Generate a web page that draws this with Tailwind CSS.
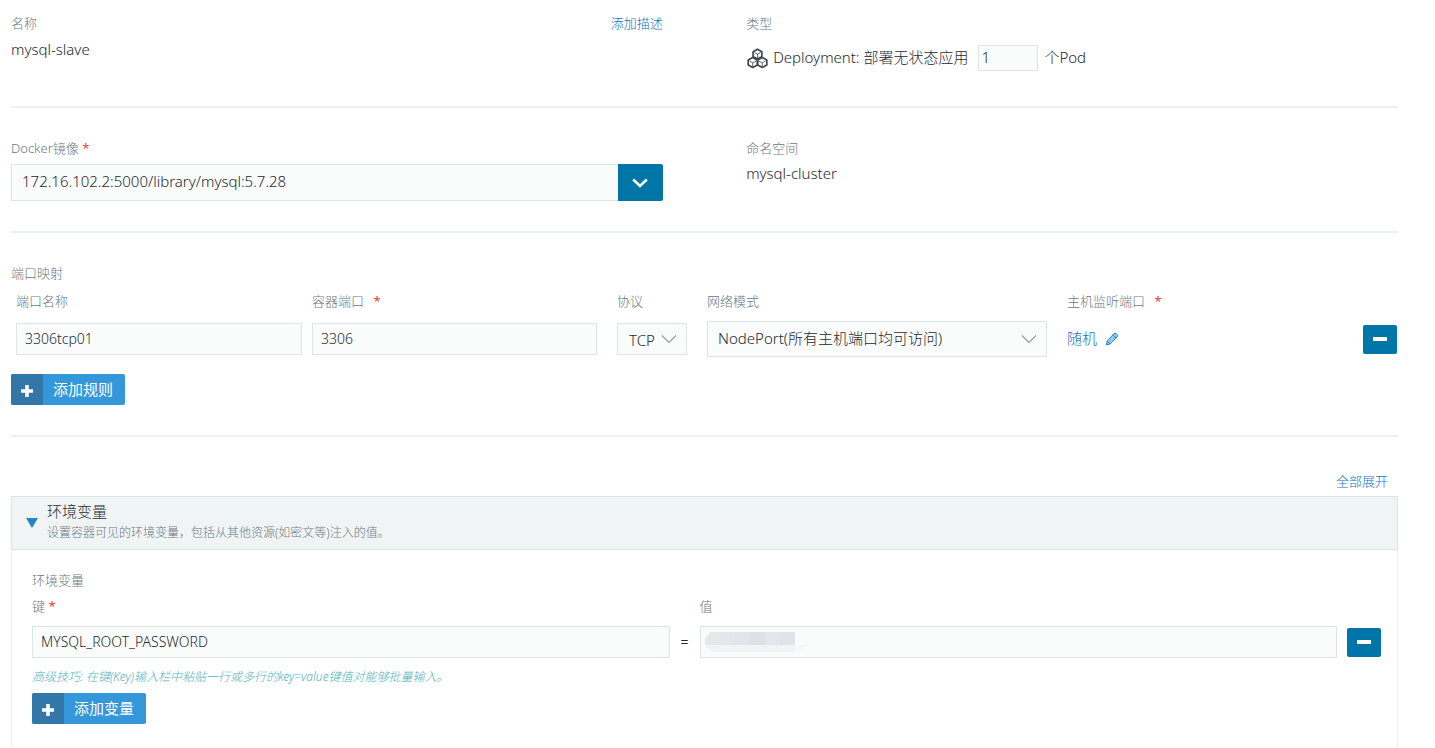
<!DOCTYPE html>
<html lang="zh-CN">
<head>
    <meta charset="UTF-8">
    <meta name="viewport" content="width=device-width, initial-scale=1.0">
    <title>mysql-slave</title>
    <script src="https://cdn.jsdelivr.net/npm/@tailwindcss/browser@4"></script>
</head>
<body class="bg-white">
    <form class="min-h-screen flex flex-col pl-[11px] pr-[37px] font-['Noto_Sans','Noto_Sans_CJK_SC',sans-serif] font-light text-[15px] leading-6 text-[#25292f]">

        <!-- Name and type -->
        <section class="grid grid-cols-[47%_47%] justify-between pt-[13px] pb-[35px] border-b-2 border-[#ecf0f0]">
            <div>
                <div class="flex justify-between text-[13px] leading-5">
                    <span class="text-[#6c7882]">名称</span>
                    <a href="#" class="text-[#1474c0]">添加描述</a>
                </div>
                <div class="mt-1">mysql-slave</div>
            </div>
            <div>
                <div class="text-[13px] leading-5 text-[#6c7882]">类型</div>
                <div class="mt-3 flex items-center">
                    <svg class="w-[21px] h-[21px] ml-px mr-[5px] shrink-0" viewBox="0 0 21 21" fill="none" stroke="#43474d" stroke-linejoin="round">
                        <g stroke-width="1.7">
                            <path d="M10.500 1.200 14.900 3.700V8.600L10.500 11 6.100 8.600V3.700Z"/>
                            <path d="M5.700 9.400 10.300 12.100V16.900L5.700 19.500 1.200 16.900V12.100Z"/>
                            <path d="M15.300 9.400 19.800 12.100V16.900L15.300 19.500 10.700 16.900V12.100Z"/>
                        </g>
                        <g stroke-width=".8">
                            <path d="M7.500 4.500 10.500 6 13.500 4.500M10.500 6V10"/>
                            <path d="M2.500 13 5.700 14.800 9.300 13M5.700 14.800V18.500"/>
                            <path d="M11.700 13 15.300 14.800 18.500 13M15.300 14.800V18.500"/>
                        </g>
                    </svg>
                    <label for="scale" class="pb-0.5">Deployment: 部署无状态应用</label>
                    <input id="scale" type="text" value="1" class="w-[60px] h-[26px] ml-2.5 mr-1.5 px-0.5 pb-0.5 border border-[#dce4e4] bg-[#fafcfc] outline-none">
                    <span class="pb-0.5">个Pod</span>
                </div>
            </div>
        </section>

        <!-- Image and namespace -->
        <section class="grid grid-cols-[47%_47%] justify-between pt-[30px] pb-[30px] border-b-2 border-[#ecf0f0]">
            <div>
                <label for="image" class="block text-[13px] leading-5 text-[#6c7882]">Docker镜像 <span class="text-[#f03c3c] font-normal">*</span></label>
                <div class="mt-1.5 flex">
                    <input id="image" type="text" value="172.16.102.2:5000/library/mysql:5.7.28" class="flex-1 min-w-0 h-[37px] px-2.5 pb-1 border border-r-0 border-[#dce4e4] bg-[#fafcfc] outline-none">
                    <button type="button" aria-label="选择镜像" class="w-[45px] h-[37px] flex items-center justify-center rounded-r-xs bg-[#0075a8]">
                        <svg class="w-4 h-4" viewBox="0 0 16 16" fill="none" stroke="#fff" stroke-width="2.600"><path d="M1.200 4.500 8 11 14.800 4.500"/></svg>
                    </button>
                </div>
            </div>
            <div>
                <div class="text-[13px] leading-5 text-[#6c7882]">命名空间</div>
                <div class="mt-[3px]">mysql-cluster</div>
            </div>
        </section>

        <!-- Port mapping -->
        <section class="pt-[30px] pb-[30px] border-b-2 border-[#ecf0f0]">
            <div class="text-[13px] leading-5 text-[#6c7882]">端口映射</div>
            <div class="mt-2 pl-[5px] pr-px grid grid-cols-[296fr_305fr_90px_360fr_296fr_34px] items-center gap-y-2.5">
                <label for="port-name" class="text-[13px] leading-5 text-[#6c7882]">端口名称</label>
                <label for="port" class="text-[13px] leading-5 text-[#6c7882]">容器端口 <span class="ml-1.5 text-[#f03c3c] font-normal">*</span></label>
                <label for="protocol" class="text-[13px] leading-5 text-[#6c7882]">协议</label>
                <label for="mode" class="text-[13px] leading-5 text-[#6c7882]">网络模式</label>
                <div class="text-[13px] leading-5 text-[#6c7882]">主机监听端口 <span class="ml-1.5 text-[#f03c3c] font-normal">*</span></div>
                <div></div>

                <div class="pr-2.5">
                    <input id="port-name" type="text" value="3306tcp01" class="block w-full h-8 px-2 pb-0.5 border border-[#dce4e4] bg-[#fafcfc] text-sm outline-none">
                </div>
                <div class="pr-5">
                    <input id="port" type="text" value="3306" class="block w-full h-8 px-2 pb-0.5 border border-[#dce4e4] bg-[#fafcfc] text-sm outline-none">
                </div>
                <div class="pr-5 relative">
                    <select id="protocol" class="block w-full h-8 px-[11px] pt-0.5 appearance-none border border-[#dce4e4] bg-[#fafcfc] outline-none">
                        <option>TCP</option>
                    </select>
                    <svg class="absolute right-[30px] top-3 w-4 h-2 pointer-events-none" viewBox="0 0 16 8" fill="none" stroke="#99a1a6" stroke-width="1.200"><path d="M1 .5 8 7.500 15 .5"/></svg>
                </div>
                <div class="pr-5 relative">
                    <select id="mode" class="block w-full h-9 px-2.5 pb-0.5 appearance-none border border-[#dce4e4] bg-[#fafcfc] outline-none">
                        <option>NodePort(所有主机端口均可访问)</option>
                    </select>
                    <svg class="absolute right-[30px] top-3.5 w-4 h-2 pointer-events-none" viewBox="0 0 16 8" fill="none" stroke="#99a1a6" stroke-width="1.200"><path d="M1 .5 8 7.500 15 .5"/></svg>
                </div>
                <a href="#" class="flex items-center gap-2 text-[#1474c0]">
                    <span class="pb-0.5">随机</span>
                    <svg class="w-3.5 h-3.5" viewBox="0 0 14 14" fill="none" stroke="#2585cc" stroke-linejoin="round">
                        <path d="M1.300 12.900 2.200 9.200 8.700 1.900Q10 .7 11.400 1.800L12 2.400Q13.200 3.600 12.200 4.900L5.200 11.900Z" fill="#9cc8ea"/>
                        <path d="M7.800 3 11 6M2.200 9.200 5.200 11.900"/>
                    </svg>
                </a>
                <button type="button" aria-label="删除规则" class="h-[29px] flex items-center justify-center rounded-xs bg-[#0075a8]">
                    <span class="w-3.5 h-1 bg-white"></span>
                </button>
            </div>
            <button type="button" class="mt-[17px] h-[31px] flex rounded-xs overflow-hidden bg-[#3497da] text-white font-normal leading-[31px]">
                <span class="w-8 h-full flex items-center justify-center pt-[3px] bg-[#3377a8]">
                    <svg class="w-3 h-3" viewBox="0 0 12 12" stroke="#fff" stroke-width="3.500"><path d="M0 6H12M6 0V12"/></svg>
                </span>
                <span class="pl-2.5 pr-3">添加规则</span>
            </button>
        </section>

        <div class="pt-[34px] pb-[5px] pr-2.5 text-right text-[13px] leading-5">
            <a href="#" class="text-[#1474c0]">全部展开</a>
        </div>

        <!-- Environment variables -->
        <section class="flex-1 flex flex-col">
            <div class="h-[54px] pl-3.5 flex items-center border border-[#dce4e4] bg-[#f0f4f5]">
                <svg class="w-3 h-2.5" viewBox="0 0 12 10" fill="#2585cc"><path d="M0 0H12L6 10Z"/></svg>
                <div class="ml-[9px] pb-[3px]">
                    <h2 class="leading-[22px]">环境变量</h2>
                    <p class="text-xs leading-[21px] text-[#6c7882]">设置容器可见的环境变量，包括从其他资源(如密文等)注入的值。</p>
                </div>
            </div>
            <div class="flex-1 pt-5 pb-6 pl-5 pr-4 border-x border-[#ecf0f0]">
                <div class="text-[13px] leading-5 text-[#6c7882]">环境变量</div>
                <div class="mt-1.5 grid grid-cols-[1fr_30px_1fr_10px_34px] items-center gap-y-2.5">
                    <label for="env-key" class="text-[13px] leading-5 text-[#6c7882]">键 <span class="text-[#f03c3c] font-normal">*</span></label>
                    <div></div>
                    <label for="env-value" class="text-[13px] leading-5 text-[#6c7882]">值</label>
                    <div></div>
                    <div></div>

                    <input id="env-key" type="text" value="MYSQL_ROOT_PASSWORD" class="h-8 px-2 pb-0.5 border border-[#dce4e4] bg-[#fafcfc] text-sm outline-none">
                    <span class="text-center text-sm font-normal">=</span>
                    <div class="relative">
                        <input id="env-value" type="text" class="block w-full h-8 px-2 border border-[#dce4e4] bg-[#fafcfc] text-sm outline-none">
                        <!-- Masked value -->
                        <svg class="absolute left-[5px] top-1.5 w-[104px] h-5 pointer-events-none" viewBox="0 0 104 20">
                            <path d="M6 0H15V13H0V6Z" fill="#e6e7e9"/>
                            <path d="M15 0H30V13H15Z" fill="#e4e6e8"/>
                            <path d="M30 0H45V13H30Z" fill="#e1e5e9"/>
                            <path d="M45 0H60V13H45Z" fill="#dfe0e3"/>
                            <path d="M60 0H75V13H60Z" fill="#e4e7ea"/>
                            <path d="M75 0H90V13H75Z" fill="#e0e4e8"/>
                            <path d="M0 13H90V20H8Q2 18 0 13Z" fill="#f1f3f4"/>
                            <path d="M90 13H103Q98 20 90 20Z" fill="#f7f9f9"/>
                        </svg>
                    </div>
                    <div></div>
                    <button type="button" aria-label="删除变量" class="h-[29px] flex items-center justify-center rounded-xs bg-[#0075a8]">
                        <span class="w-3.5 h-1 bg-white"></span>
                    </button>
                </div>
                <p class="mt-[9px] text-xs leading-5 italic text-[#4fb3bd]">高级技巧: 在键(Key)输入栏中粘贴一行或多行的key=value键值对能够批量输入。</p>
                <button type="button" class="mt-1.5 h-[31px] flex rounded-xs overflow-hidden bg-[#3497da] text-white font-normal leading-[31px]">
                    <span class="w-8 h-full flex items-center justify-center pt-[3px] bg-[#3377a8]">
                        <svg class="w-3 h-3" viewBox="0 0 12 12" stroke="#fff" stroke-width="3.500"><path d="M0 6H12M6 0V12"/></svg>
                    </span>
                    <span class="pl-2.5 pr-3">添加变量</span>
                </button>
            </div>
        </section>
    </form>
</body>
</html>
